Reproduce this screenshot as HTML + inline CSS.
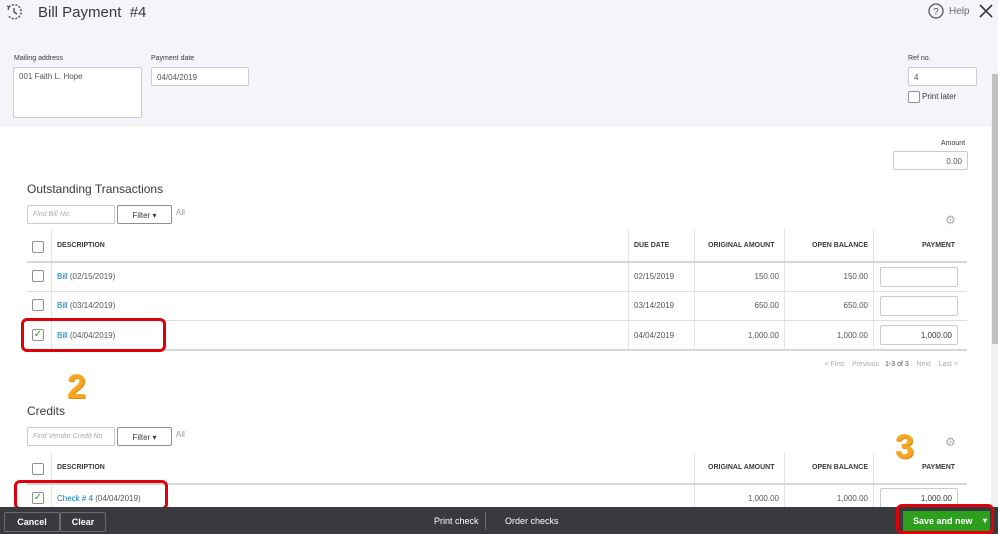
<!DOCTYPE html>
<html><head><meta charset="utf-8"><style>
*{box-sizing:border-box;margin:0;padding:0}
body{width:998px;height:534px;overflow:hidden;background:#fff;font-family:"Liberation Sans",sans-serif;color:#393a3d;position:relative}
.a{position:absolute}
.inp{position:absolute;background:#fff;border:1px solid #c9cbd0;border-radius:2px;font-size:8px;color:#555;padding:5px 5px}
.lbl{position:absolute;font-size:7px;color:#393a3d}
.th{position:absolute;font-size:7px;font-weight:bold;color:#393a3d}
.td{position:absolute;font-size:8px;color:#555}
.lnk{color:#0077c5}
.cb{position:absolute;width:12px;height:12px;border:1px solid #8d9096;border-radius:2px;background:#fff}
.hl{position:absolute;height:1px;background:#dcdde0}
.vl{position:absolute;width:1px;background:#e3e4e6}
.red{position:absolute;border:3px solid #e0000a;border-radius:6px}
.num{position:absolute;font-size:34px;font-weight:bold;color:#f5a623;text-shadow:1px 1px 0 #e08a10,0 0 2px #fff3c0;font-family:"Liberation Sans",sans-serif}
</style></head><body>
<div class="a" style="left:0;top:0;width:998px;height:127px;background:#f4f5f8"></div>
<svg class="a" style="left:5px;top:3px" width="18" height="18" viewBox="0 0 18 18"><path d="M4 4 A7 7 0 1 1 3 12" fill="none" stroke="#555" stroke-width="1.5" stroke-dasharray="2 1.5"/><path d="M9 5 V9 L12 11" fill="none" stroke="#555" stroke-width="1.4"/><path d="M2 3 L4 4 L3 7" fill="none" stroke="#555" stroke-width="1.3"/></svg>
<div class="a" style="left:38px;top:4px;font-size:15px;color:#393a3d">Bill Payment &nbsp;#4</div>
<svg class="a" style="left:928px;top:3px" width="16" height="16" viewBox="0 0 16 16"><circle cx="8" cy="8" r="7" fill="none" stroke="#555" stroke-width="1.3"/><text x="8" y="12" font-size="10" text-anchor="middle" fill="#555" font-family="Liberation Sans">?</text></svg>
<div class="a" style="left:949px;top:6px;font-size:10px;color:#6b6c72">Help</div>
<svg class="a" style="left:978px;top:3px" width="16" height="16" viewBox="0 0 16 16"><path d="M2 2 L14 14 M14 2 L2 14" stroke="#393a3d" stroke-width="1.6"/></svg>

<div class="lbl" style="left:14px;top:55px">Mailing address</div>
<div class="inp" style="left:13px;top:67px;width:129px;height:51px;padding:4px 5px">001 Faith L. Hope</div>
<div class="lbl" style="left:151px;top:55px">Payment date</div>
<div class="inp" style="left:151px;top:67px;width:98px;height:19px">04/04/2019</div>
<div class="lbl" style="left:908px;top:55px">Ref no.</div>
<div class="inp" style="left:908px;top:67px;width:69px;height:19px">4</div>
<div class="cb" style="left:908px;top:91px"></div>
<div class="a" style="left:922px;top:92px;font-size:8px">Print later</div>

<div class="lbl" style="left:941px;top:140px">Amount</div>
<div class="inp" style="left:893px;top:151px;width:75px;height:19px;text-align:right">0.00</div>

<div class="a" style="left:27px;top:182px;font-size:12px">Outstanding Transactions</div>
<div class="inp" style="left:27px;top:205px;width:88px;height:19px;font-style:italic;color:#aaa;font-size:7px">Find Bill No.</div>
<div class="inp" style="left:117px;top:205px;width:55px;height:19px;color:#393a3d;border-color:#8d9096;text-align:center">Filter ▾</div>
<div class="a" style="left:176px;top:208px;font-size:8px;color:#999">All</div>
<div class="a" style="left:945px;top:213px;font-size:12px;color:#aaa">⚙</div>

<div class="vl" style="left:51px;top:229px;height:121px"></div>
<div class="vl" style="left:628px;top:229px;height:121px"></div>
<div class="vl" style="left:694px;top:229px;height:121px"></div>
<div class="vl" style="left:784px;top:229px;height:121px"></div>
<div class="vl" style="left:873px;top:229px;height:121px"></div>
<div class="cb" style="left:32px;top:241px"></div>
<div class="th" style="left:57px;top:242px">DESCRIPTION</div>
<div class="th" style="left:634px;top:242px">DUE DATE</div>
<div class="th" style="left:708px;top:242px">ORIGINAL AMOUNT</div>
<div class="th" style="left:812px;top:242px">OPEN BALANCE</div>
<div class="th" style="left:922px;top:242px">PAYMENT</div>
<div class="hl" style="left:27px;top:261px;width:940px;height:2px;background:#d4d6da"></div>
<div class="hl" style="left:27px;top:291px;width:940px"></div>
<div class="hl" style="left:27px;top:320px;width:940px"></div>
<div class="hl" style="left:27px;top:349px;width:940px;height:2px;background:#d4d6da"></div>

<div class="cb" style="left:32px;top:270px"></div>
<div class="td" style="left:57px;top:272px"><span class="lnk">Bill</span> (02/15/2019)</div>
<div class="td" style="left:634px;top:272px">02/15/2019</div>
<div class="td" style="left:737px;top:272px;width:42px;text-align:right">150.00</div>
<div class="td" style="left:820px;top:272px;width:48px;text-align:right">150.00</div>
<div class="inp" style="left:880px;top:267px;width:78px;height:20px"></div>

<div class="cb" style="left:32px;top:299px"></div>
<div class="td" style="left:57px;top:301px"><span class="lnk">Bill</span> (03/14/2019)</div>
<div class="td" style="left:634px;top:301px">03/14/2019</div>
<div class="td" style="left:737px;top:301px;width:42px;text-align:right">650.00</div>
<div class="td" style="left:820px;top:301px;width:48px;text-align:right">650.00</div>
<div class="inp" style="left:880px;top:296px;width:78px;height:20px"></div>

<div class="cb" style="left:32px;top:329px;color:#2ca01c;font-size:10px;line-height:10px;text-align:center">✓</div>
<div class="td" style="left:57px;top:331px"><span class="lnk">Bill</span> (04/04/2019)</div>
<div class="td" style="left:634px;top:331px">04/04/2019</div>
<div class="td" style="left:729px;top:331px;width:50px;text-align:right">1,000.00</div>
<div class="td" style="left:818px;top:331px;width:50px;text-align:right">1,000.00</div>
<div class="inp" style="left:880px;top:325px;width:78px;height:20px;text-align:right;color:#393a3d">1,000.00</div>
<div class="red" style="left:21px;top:318px;width:145px;height:34px"></div>

<div class="a" style="left:810px;top:361px;width:148px;text-align:right;font-size:7px;color:#aaa;white-space:nowrap">&lt; First &nbsp;&nbsp; Previous &nbsp;&nbsp;<span style="color:#555">1-3 of 3</span>&nbsp;&nbsp;&nbsp; Next &nbsp;&nbsp; Last &gt;</div>

<div class="num" style="left:67px;top:368px">2</div>
<div class="a" style="left:27px;top:404px;font-size:12px">Credits</div>
<div class="inp" style="left:27px;top:427px;width:88px;height:19px;font-style:italic;color:#aaa;font-size:7px;white-space:nowrap;overflow:hidden">Find Vendor Credit No</div>
<div class="inp" style="left:117px;top:427px;width:55px;height:19px;color:#393a3d;border-color:#8d9096;text-align:center">Filter ▾</div>
<div class="a" style="left:176px;top:430px;font-size:8px;color:#999">All</div>
<div class="num" style="left:895px;top:428px">3</div>
<div class="a" style="left:945px;top:435px;font-size:12px;color:#aaa">⚙</div>

<div class="vl" style="left:51px;top:452px;height:55px"></div>
<div class="vl" style="left:694px;top:452px;height:55px"></div>
<div class="vl" style="left:784px;top:452px;height:55px"></div>
<div class="vl" style="left:873px;top:452px;height:55px"></div>
<div class="cb" style="left:32px;top:463px"></div>
<div class="th" style="left:57px;top:464px">DESCRIPTION</div>
<div class="th" style="left:708px;top:464px">ORIGINAL AMOUNT</div>
<div class="th" style="left:812px;top:464px">OPEN BALANCE</div>
<div class="th" style="left:922px;top:464px">PAYMENT</div>
<div class="hl" style="left:27px;top:483px;width:940px;height:2px;background:#d4d6da"></div>
<div class="cb" style="left:32px;top:492px;color:#2ca01c;font-size:10px;line-height:10px;text-align:center">✓</div>
<div class="td" style="left:57px;top:494px"><span class="lnk">Check # 4</span> (04/04/2019)</div>
<div class="td" style="left:729px;top:494px;width:50px;text-align:right">1,000.00</div>
<div class="td" style="left:818px;top:494px;width:50px;text-align:right">1,000.00</div>
<div class="inp" style="left:880px;top:488px;width:78px;height:22px;text-align:right;color:#393a3d">1,000.00</div>
<div class="red" style="left:14px;top:480px;width:154px;height:30px"></div>

<div class="a" style="left:991px;top:70px;width:7px;height:437px;background:#f1f1f1"></div>
<div class="a" style="left:992px;top:74px;width:6px;height:270px;background:#c1c1c1"></div>

<div class="a" style="left:0;top:507px;width:998px;height:27px;background:#393a3d"></div>
<div class="a" style="left:4px;top:512px;width:56px;height:20px;border:1px solid #6b6c72;border-radius:2px;color:#fff;font-size:9px;font-weight:bold;text-align:center;line-height:18px">Cancel</div>
<div class="a" style="left:60px;top:512px;width:46px;height:20px;border:1px solid #6b6c72;border-radius:2px;color:#fff;font-size:9px;font-weight:bold;text-align:center;line-height:18px">Clear</div>
<div class="a" style="left:434px;top:516px;color:#fff;font-size:9px">Print check</div>
<div class="a" style="left:485px;top:512px;width:1px;height:18px;background:#6b6c72"></div>
<div class="a" style="left:505px;top:516px;color:#fff;font-size:9px">Order checks</div>
<div class="a" style="left:903px;top:511px;width:87px;height:20px;background:#2ca01c;color:#fff;font-size:9px;font-weight:bold;line-height:20px;padding-left:10px">Save and new<span style="position:absolute;right:3px;font-size:8px">▾</span></div>
<div class="red" style="left:896px;top:504px;width:98px;height:30px"></div>
</body></html>
